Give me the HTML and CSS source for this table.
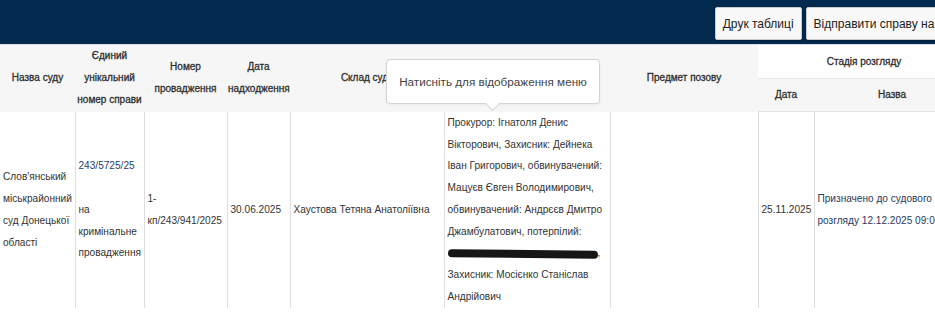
FILE: index.html
```html
<!DOCTYPE html>
<html lang="uk">
<head>
<meta charset="utf-8">
<title>Реєстр справ</title>
<link rel="stylesheet" href="styles.css">
</head>
<body>
<div class="page">
  <div class="topbar">
    <button class="btn">Друк таблиці</button>
    <button class="btn">Відправити справу на розгляд</button>
  </div>
  <div class="table-wrap">
    <table class="cases">
      <colgroup>
        <col class="c1"><col class="c2"><col class="c3"><col class="c4"><col class="c5"><col class="c6"><col class="c7"><col class="c8"><col class="c9">
      </colgroup>
      <thead>
        <tr>
          <th rowspan="2">Назва суду</th>
          <th rowspan="2">Єдиний унікальний номер справи</th>
          <th rowspan="2">Номер провадження</th>
          <th rowspan="2">Дата надходження</th>
          <th rowspan="2">Склад суду</th>
          <th rowspan="2"></th>
          <th rowspan="2">Предмет позову</th>
          <th colspan="2" class="stage">Стадія розгляду</th>
        </tr>
        <tr>
          <th>Дата</th>
          <th>Назва</th>
        </tr>
      </thead>
      <tbody>
        <tr>
          <td>Слов'янський міськрайонний суд Донецької області</td>
          <td><a class="link" href="#">243/5725/25</a><br><br>на кримінальне провадження</td>
          <td>1-кп/243/941/2025</td>
          <td>30.06.2025</td>
          <td>Хаустова Тетяна Анатоліївна</td>
          <td>Прокурор: Ігнатоля Денис Вікторович, Захисник: Дейнека Іван Григорович, обвинувачений: Мацуєв Євген Володимирович, обвинувачений: Андрєєв Дмитро Джамбулатович, потерпілий: <span class="redact"></span>, Захисник: Мосієнко Станіслав Андрійович</td>
          <td></td>
          <td>25.11.2025</td>
          <td class="stage-name">Призначено до судового розгляду 12.12.2025 09:00</td>
        </tr>
      </tbody>
    </table>
    <div class="tooltip">Натисніть для відображення меню</div>
  </div>
</div>
</body>
</html>
```

FILE: styles.css
```css
html, body {
  margin: 0;
  padding: 0;
  background: #ffffff;
  overflow: hidden;
}

.page {
  width: 993px;
  font-family: "Liberation Sans", Arial, sans-serif;
  color: #333333;
}

.topbar {
  height: 44px;
  background: #022a4f;
  border-bottom: 1px solid #d8dde3;
  display: flex;
  align-items: center;
  justify-content: flex-end;
  gap: 4px;
  padding-right: 4px;
}

.btn {
  height: 33px;
  margin-top: 3px;
  padding: 0 7px;
  background: #f8f8f8;
  border: 1px solid #c9ccd0;
  border-radius: 2px;
  font-family: "Liberation Sans", Arial, sans-serif;
  font-size: 12px;
  color: #222222;
  box-shadow: 0 1px 2px rgba(0, 0, 0, 0.35);
}

.table-wrap {
  position: relative;
}

.cases {
  width: 970px;
  table-layout: fixed;
  border-collapse: collapse;
  font-size: 10.1px;
}

.c1 { width: 75px; }
.c2 { width: 69px; }
.c3 { width: 83px; }
.c4 { width: 63px; }
.c5 { width: 154px; }
.c6 { width: 166px; }
.c7 { width: 148px; }
.c8 { width: 56px; }
.c9 { width: 156px; }

.cases thead th {
  background: #f6f6f6;
  font-weight: normal;
  font-size: 10px;
  line-height: 22px;
  padding: 0 1px;
  color: #2e2e2e;
  -webkit-text-stroke: 0.3px #2e2e2e;
  text-align: center;
  vertical-align: middle;
}

.cases thead tr:first-child th {
  height: 33px;
}

.cases thead tr:last-child th {
  height: 32px;
  border-bottom: 1px solid #e2e2e2;
}

.cases thead th.stage {
  background: #ffffff;
  border-bottom: 1px solid #e6e6e6;
}

.cases tbody td {
  height: 196px;
  padding: 0 2px 0 3px;
  line-height: 21.75px;
  vertical-align: middle;
  border-left: 1px solid #dedede;
  border-right: 1px solid #dedede;
  color: #333333;
}

.cases tbody td:first-child {
  border-left: none;
}

.link {
  color: #1d3e6c;
  text-decoration: none;
}

.cases tbody td.stage-name {
  color: #1f3a60;
  padding-right: 14px;
}

.redact {
  display: inline-block;
  width: 150px;
  height: 8px;
  background: #161616;
  border-radius: 5px;
  vertical-align: middle;
  transform: rotate(0.6deg);
}

.tooltip {
  position: absolute;
  left: 386px;
  top: 14px;
  width: 214px;
  height: 45px;
  box-sizing: border-box;
  display: flex;
  align-items: center;
  justify-content: center;
  background: #ffffff;
  border: 1px solid #d4d4d4;
  border-radius: 4px;
  font-size: 11.7px;
  color: #444444;
  box-shadow: 0 1px 3px rgba(0, 0, 0, 0.06);
}

.tooltip::after {
  content: "";
  position: absolute;
  left: 100px;
  bottom: -6px;
  width: 10px;
  height: 10px;
  background: #ffffff;
  border-right: 1px solid #d4d4d4;
  border-bottom: 1px solid #d4d4d4;
  transform: rotate(45deg);
}
```
